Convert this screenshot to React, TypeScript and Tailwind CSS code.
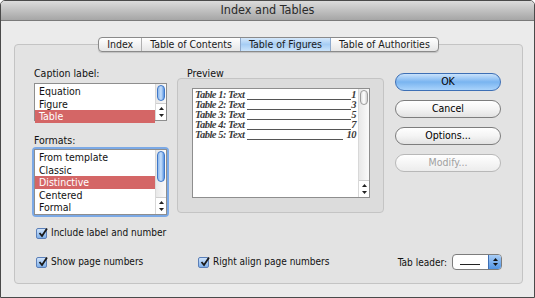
import React from 'react';

const ui = { fontFamily: '"DejaVu Sans Condensed", "DejaVu Sans", "Liberation Sans", sans-serif' };
const serif = { fontFamily: '"Liberation Serif", "DejaVu Serif", serif' };

function ScrollArrows() {
  return (
    <div className="flex flex-col items-center border-t border-[#cfcfcf] bg-white">
      <svg width="9" height="8" viewBox="0 0 9 8"><path d="M2 6 L4.5 3 L7 6 Z" fill="#222" /></svg>
      <svg width="9" height="8" viewBox="0 0 9 8"><path d="M2 2 L4.5 5 L7 2 Z" fill="#222" /></svg>
    </div>
  );
}

function Scrollbar({ thumb, blue }: { thumb: number; blue?: boolean }) {
  return (
    <div className="w-[11px] flex flex-col border-l border-[#d8d8d8] bg-gradient-to-r from-[#e8e8e8] to-[#fafafa]">
      <div className="flex-1 px-[1px] pt-[1px]">
        <div
          className={`w-[8px] rounded-full border ${
            blue
              ? 'border-[#3f78c9] bg-gradient-to-r from-[#8fb9ec] via-[#c8e0fb] to-[#5b95e0]'
              : 'border-[#9c9c9c] bg-gradient-to-r from-[#e0e0e0] via-white to-[#d0d0d0]'
          }`}
          style={{ height: thumb }}
        />
      </div>
      <ScrollArrows />
    </div>
  );
}

function ListBox({ items, selected, height, thumb, focus }: { items: string[]; selected: number; height: number; thumb: number; focus?: boolean }) {
  return (
    <div className={`w-[133px] ${focus ? 'rounded-[2px] shadow-[0_0_0_2px_#7ba9e6]' : ''}`}>
      <div className="flex border border-[#8e8e8e] bg-white" style={{ height }}>
        <div className="flex-1 pt-[1px]">
          {items.map((it, i) => (
            <div
              key={it}
              className={`h-[12.5px] pl-[4px] text-[10.5px] leading-[12.5px] ${i === selected ? 'bg-[#d46666] text-white' : 'text-[#111]'}`}
            >
              {it}
            </div>
          ))}
        </div>
        <Scrollbar thumb={thumb} blue />
      </div>
    </div>
  );
}

function Check({ label }: { label: string }) {
  return (
    <div className="flex items-center h-[12px] gap-[4px]">
      <div className="relative w-[11px] h-[11px] rounded-[2px] border border-[#5b7fb8] bg-gradient-to-b from-[#cfe3fa] to-[#7fb0ea]">
        <svg className="absolute -top-[2px] left-[0px]" width="12" height="12" viewBox="0 0 12 12">
          <path d="M2.5 6 L5 9 L10 1.5" stroke="#1a1a1a" strokeWidth="1.8" fill="none" />
        </svg>
      </div>
      <span className="text-[10px] leading-[12px] text-[#111]">{label}</span>
    </div>
  );
}

function Btn({ label, primary, disabled }: { label: string; primary?: boolean; disabled?: boolean }) {
  return (
    <div
      className={`h-[18px] w-[106px] rounded-full border flex items-center justify-center text-[10.5px] ${
        primary
          ? 'border-[#3d6fb5] bg-gradient-to-b from-[#c9e2fb] via-[#79b4f0] to-[#a9d3fb] text-black'
          : disabled
          ? 'border-[#b8b8b8] bg-gradient-to-b from-white to-[#ececec] text-[#a0a0a0]'
          : 'border-[#7d7d7d] bg-gradient-to-b from-white via-[#f4f4f4] to-[#e2e2e2] text-black'
      }`}
    >
      {label}
    </div>
  );
}

const previewRows = [
  ['Table 1: Text', '1'],
  ['Table 2: Text', '3'],
  ['Table 3: Text', '5'],
  ['Table 4: Text', '7'],
  ['Table 5: Text', '10'],
];

export default function App() {
  return (
    <div className="w-[535px] h-[298px] overflow-hidden" style={ui}>
      <div className="h-full flex flex-col rounded-t-[5px] border border-[#4a4a4a] bg-[#ebebeb]">
        {/* title bar */}
        <div className="h-[20px] flex items-center justify-center rounded-t-[4px] border-b border-[#7a7a7a] bg-gradient-to-b from-[#dcdcdc] to-[#a6a6a6] text-[12.5px] text-[#2a2a2a]">
          Index and Tables
        </div>

        <div className="flex-1 pl-[13px] pr-[11px] pt-[16px]">
          {/* tabs */}
          <div className="relative z-10 flex justify-center">
            <div className="flex h-[15px] rounded-[4px] border border-[#8a8a8a] bg-gradient-to-b from-white to-[#e6e6e6] text-[10.5px] text-[#1a1a1a] shadow-[0_1px_1px_rgba(0,0,0,0.15)]">
              <div className="px-[8px] leading-[13px]">Index</div>
              <div className="px-[8px] leading-[13px] border-l border-[#b0b0b0]">Table of Contents</div>
              <div className="px-[8px] leading-[13px] border-l border-[#8ea9cc] bg-gradient-to-b from-[#d5e8fb] via-[#a6cdf4] to-[#cce4fb]">Table of Figures</div>
              <div className="px-[8px] leading-[13px] border-l border-[#8ea9cc]">Table of Authorities</div>
            </div>
          </div>

          {/* group box */}
          <div className="-mt-[8px] h-[240px] rounded-[4px] border border-[#c4c4c4] bg-[#e3e3e3] pl-[19px] pt-[22px]">
            <div className="flex">
              {/* left column */}
              <div className="w-[134px] flex flex-col">
                <div className="text-[10.5px] text-[#111] leading-[12px]">Caption label:</div>
                <div className="mt-[4px]">
                  <ListBox items={['Equation', 'Figure', 'Table']} selected={2} height={38} thumb={16} />
                </div>
                <div className="mt-[13px] text-[10.5px] text-[#111] leading-[12px]">Formats:</div>
                <div className="mt-[3px]">
                  <ListBox items={['From template', 'Classic', 'Distinctive', 'Centered', 'Formal']} selected={2} height={66} thumb={31} focus />
                </div>
              </div>

              {/* preview */}
              <div className="ml-[9px] flex flex-col">
                <div className="pl-[10px] mt-[1px] text-[10.5px] leading-[10px] text-[#111]">Preview</div>
                <div className="w-[207px] h-[135px] rounded-[4px] border border-[#c4c4c4] bg-[#dcdcdc] pl-[14px] pt-[9px]">
                  <div className="flex w-[178px] h-[110px] border border-[#8e8e8e] bg-white">
                    <div className="flex-1 pl-[2px] pr-[2px] pt-[1px]" style={serif}>
                      {previewRows.map(([t, n], i) => (
                        <div key={t} className="flex items-end h-[10px] text-[10.5px] leading-[10px] italic font-bold tracking-[-0.5px] text-[#3a3a3a]">
                          <span>{t}</span>
                          <span className={`flex-1 ml-[3px] border-b border-[#555] h-[8px] ${i === 4 ? 'mr-[4px]' : ''}`} />
                          <span>{n}</span>
                        </div>
                      ))}
                    </div>
                    <Scrollbar thumb={15} />
                  </div>
                </div>
              </div>

              {/* buttons */}
              <div className="ml-[11px] pt-[6px] flex flex-col gap-[9px]">
                <Btn label="OK" primary />
                <Btn label="Cancel" />
                <Btn label="Options..." />
                <Btn label="Modify..." disabled />
              </div>
            </div>

            {/* checkboxes */}
            <div className="mt-[12px] ml-[2px]">
              <Check label="Include label and number" />
            </div>
            <div className="mt-[15px] ml-[2px] flex items-center h-[16px]">
              <div className="w-[162px]">
                <Check label="Show page numbers" />
              </div>
              <Check label="Right align page numbers" />
              <div className="ml-auto flex items-center gap-[5px] mr-[20px]">
                <span className="text-[10px] text-[#111]">Tab leader:</span>
                <div className="flex h-[16px] w-[50px] rounded-[4px] border border-[#7d7d7d] bg-white overflow-hidden">
                  <div className="flex-1 flex items-end pb-[4px] pl-[7px]">
                    <div className="w-[20px] border-b border-[#222]" />
                  </div>
                  <div className="w-[13px] flex flex-col items-center justify-center bg-gradient-to-b from-[#a9cdf5] to-[#4f93e3] border-l border-[#3d6fb5]">
                    <svg width="7" height="10" viewBox="0 0 7 10">
                      <path d="M1 4 L3.5 1 L6 4 Z" fill="#111" />
                      <path d="M1 6 L3.5 9 L6 6 Z" fill="#111" />
                    </svg>
                  </div>
                </div>
              </div>
            </div>
          </div>
        </div>
      </div>
    </div>
  );
}
